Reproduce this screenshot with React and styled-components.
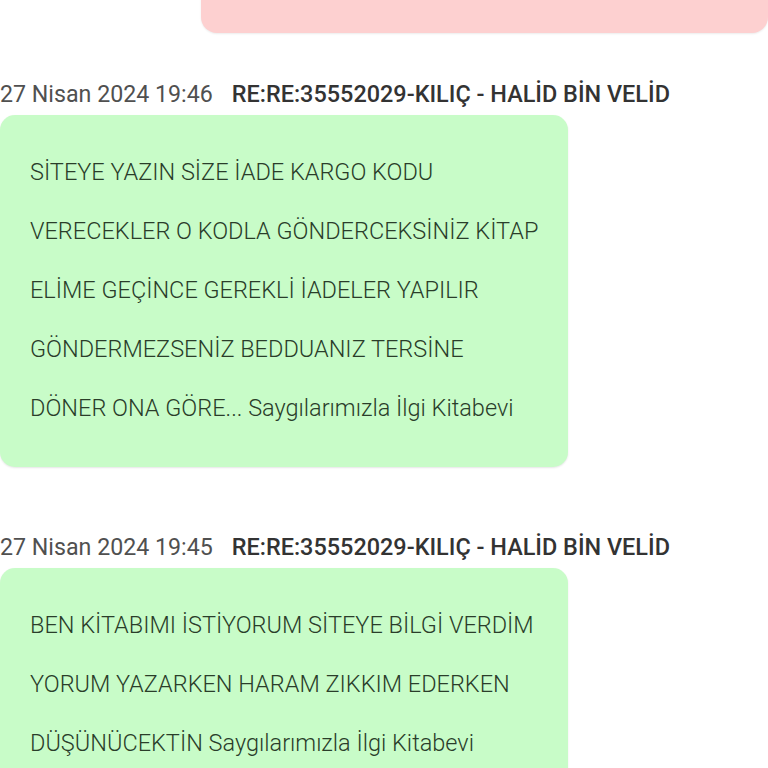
import React from "react";
import styled, { createGlobalStyle } from "styled-components";

const Global = createGlobalStyle`
  html, body { margin: 0; padding: 0; background: #ffffff; }
  body { font-family: Roboto, "Noto Sans", sans-serif; overflow: hidden; }
`;

const Page = styled.div`
  width: 768px;
  height: 768px;
  overflow: hidden;
  display: flex;
  flex-direction: column;
  & > * { flex-shrink: 0; }
`;

const SentBubble = styled.div`
  margin-left: 201px;
  margin-top: -40px;
  height: 73px;
  background: #fdd0d0;
  border-radius: 16px;
  box-shadow: 0 1px 2px rgba(0, 0, 0, 0.08);
`;

const Message = styled.section`
  display: flex;
  flex-direction: column;
  flex-shrink: 0;
  margin-top: ${(p) => p.$gap}px;
`;

const Header = styled.div`
  display: flex;
  align-items: baseline;
  gap: 19px;
  height: 28px;
  line-height: 28px;
  white-space: nowrap;
`;

const DateText = styled.span`
  font-size: 23.2px;
  color: #505050;
  font-weight: 400;
`;

const Subject = styled.span`
  font-size: 23.45px;
  color: #333333;
  font-weight: 500;
`;

const Bubble = styled.div`
  margin-top: 7px;
  width: 568px;
  box-sizing: border-box;
  background: #c8fcc8;
  border-radius: 15px;
  padding: 28px 30px 29px;
  box-shadow: 0 1px 2px rgba(0, 0, 0, 0.1);
`;

const Line = styled.p`
  margin: 0;
  height: 59px;
  line-height: 59px;
  font-size: 23.5px;
  color: #2a3d2a;
  font-weight: 300;
  white-space: nowrap;
`;

const messages = [
  {
    date: "27 Nisan 2024 19:46",
    subject: "RE:RE:35552029-KILIÇ - HALİD BİN VELİD",
    lines: [
      "SİTEYE YAZIN SİZE İADE KARGO KODU",
      "VERECEKLER O KODLA GÖNDERCEKSİNİZ KİTAP",
      "ELİME GEÇİNCE GEREKLİ İADELER YAPILIR",
      "GÖNDERMEZSENİZ BEDDUANIZ TERSİNE",
      "DÖNER ONA GÖRE... Saygılarımızla İlgi Kitabevi",
    ],
    gap: 47,
  },
  {
    date: "27 Nisan 2024 19:45",
    subject: "RE:RE:35552029-KILIÇ - HALİD BİN VELİD",
    lines: [
      "BEN KİTABIMI İSTİYORUM SİTEYE BİLGİ VERDİM",
      "YORUM YAZARKEN HARAM ZIKKIM EDERKEN",
      "DÜŞÜNÜCEKTİN Saygılarımızla İlgi Kitabevi",
    ],
    gap: 66,
  },
];

export default function App() {
  return (
    <Page>
      <Global />
      <SentBubble />
      {messages.map((m, i) => (
        <Message key={i} $gap={m.gap}>
          <Header>
            <DateText>{m.date}</DateText>
            <Subject>{m.subject}</Subject>
          </Header>
          <Bubble>
            {m.lines.map((l, j) => (
              <Line key={j}>{l}</Line>
            ))}
          </Bubble>
        </Message>
      ))}
    </Page>
  );
}
